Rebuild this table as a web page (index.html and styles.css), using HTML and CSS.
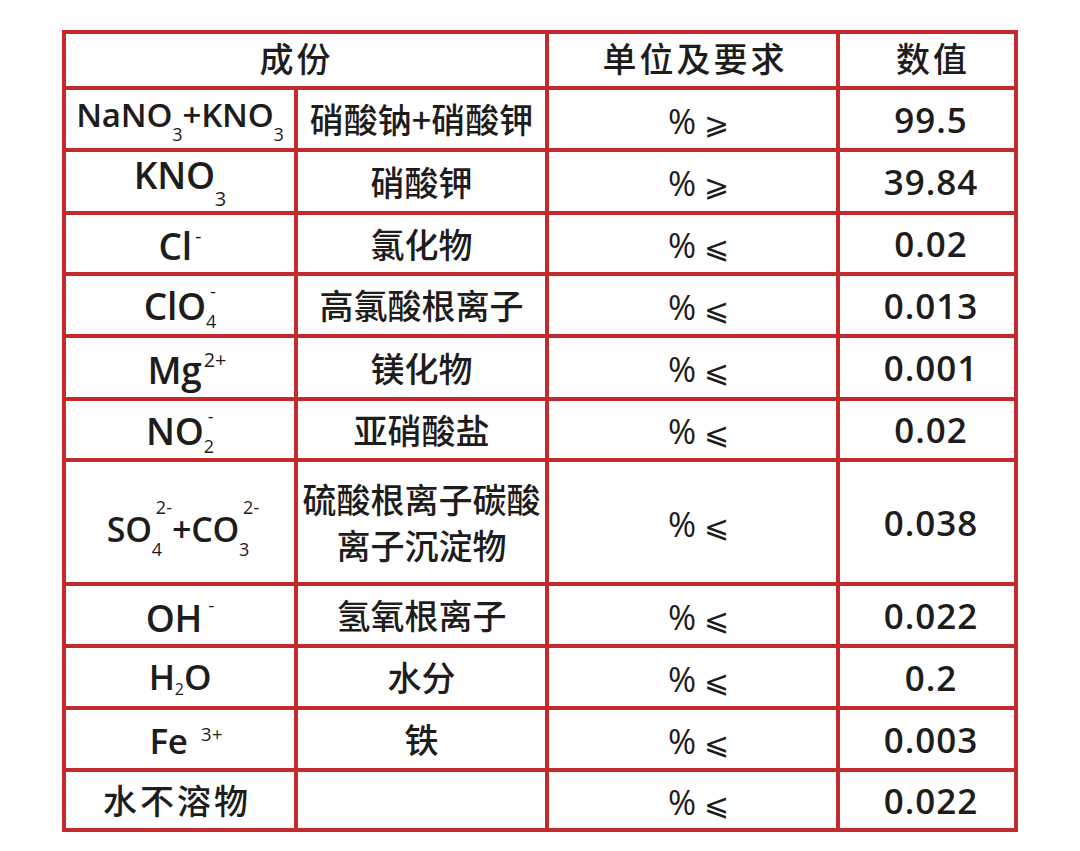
FILE: index.html
```html
<!DOCTYPE html>
<html lang="zh">
<head>
<meta charset="utf-8">
<title>成份表</title>
<link rel="stylesheet" href="styles.css">
</head>
<body>
<div class="sheet">
  <div class="cell head span2">成份</div>
  <div class="cell head">单位及要求</div>
  <div class="cell head last">数值</div>

  <div class="cell f"><span>NaNO<sub>3</sub>+KNO<sub>3</sub></span></div>
  <div class="cell cn">硝酸钠+硝酸钾</div>
  <div class="cell u"><span>%<span class="rel">⩾</span></span></div>
  <div class="cell n">99.5</div>

  <div class="cell f lg"><span>KNO<sub class="big">3</sub></span></div>
  <div class="cell cn">硝酸钾</div>
  <div class="cell u"><span>%<span class="rel">⩾</span></span></div>
  <div class="cell n">39.84</div>

  <div class="cell f lg"><span>Cl<sup class="minus">-</sup></span></div>
  <div class="cell cn">氯化物</div>
  <div class="cell u"><span>%<span class="rel">⩽</span></span></div>
  <div class="cell n">0.02</div>

  <div class="cell f lg"><span>ClO<span class="stack"><sup>-</sup><sub>4</sub></span></span></div>
  <div class="cell cn">高氯酸根离子</div>
  <div class="cell u"><span>%<span class="rel">⩽</span></span></div>
  <div class="cell n">0.013</div>

  <div class="cell f lg mg"><span>Mg<sup class="charge">2+</sup></span></div>
  <div class="cell cn">镁化物</div>
  <div class="cell u"><span>%<span class="rel">⩽</span></span></div>
  <div class="cell n">0.001</div>

  <div class="cell f lg"><span>NO<span class="stack"><sup>-</sup><sub>2</sub></span></span></div>
  <div class="cell cn">亚硝酸盐</div>
  <div class="cell u"><span>%<span class="rel">⩽</span></span></div>
  <div class="cell n">0.02</div>

  <div class="cell f ion"><span>SO<span class="stack tall"><sup>2-</sup><sub>4</sub></span>+CO<span class="stack tall"><sup>2-</sup><sub>3</sub></span></span></div>
  <div class="cell cn two">硫酸根离子碳酸<br>离子沉淀物</div>
  <div class="cell u"><span>%<span class="rel">⩽</span></span></div>
  <div class="cell n">0.038</div>

  <div class="cell f lg"><span>OH<sup class="minus gap">-</sup></span></div>
  <div class="cell cn">氢氧根离子</div>
  <div class="cell u"><span>%<span class="rel">⩽</span></span></div>
  <div class="cell n">0.022</div>

  <div class="cell f md"><span>H<sub class="small">2</sub>O</span></div>
  <div class="cell cn">水分</div>
  <div class="cell u"><span>%<span class="rel">⩽</span></span></div>
  <div class="cell n">0.2</div>

  <div class="cell f md fe"><span>Fe<sup class="gap">3+</sup></span></div>
  <div class="cell cn">铁</div>
  <div class="cell u"><span>%<span class="rel">⩽</span></span></div>
  <div class="cell n">0.003</div>

  <div class="cell cn wide">水不溶物</div>
  <div class="cell cn"></div>
  <div class="cell u"><span>%<span class="rel">⩽</span></span></div>
  <div class="cell n">0.022</div>
</div>
</body>
</html>
```

FILE: styles.css
```css
html, body {
  margin: 0;
  padding: 0;
  background: #ffffff;
}

body {
  padding: 30px 0 0 62px;
  color: #1f1c1c;
  font-family: "Open Sans", "Noto Sans CJK SC", sans-serif;
}

.sheet {
  display: grid;
  width: 956px;
  box-sizing: border-box;
  grid-template-columns: 228px 247px 287px 174px;
  grid-template-rows: 52px 58px 59px 57px 58px 59px 57px 120px 58px 58px 58px 56px;
  gap: 4px;
  padding: 4px;
  background: #c3292d;
}

.cell {
  background: #ffffff;
  display: flex;
  align-items: center;
  justify-content: center;
  text-align: center;
  font-size: 32px;
  line-height: 1;
  white-space: nowrap;
}

.head {
  font-family: "Noto Sans CJK SC", sans-serif;
  font-weight: 500;
  font-size: 34px;
  letter-spacing: 3px;
  padding-bottom: 4px;
  padding-left: 5px;
}

.head.span2 {
  grid-column: span 2;
  padding-left: 0;
  padding-right: 18px;
}

.head.last {
  padding-left: 12px;
}

.f {
  font-weight: 600;
  font-size: 33px;
  letter-spacing: -0.2px;
  padding-top: 2px;
}

.f.lg {
  font-size: 37px;
}

.f.md {
  font-size: 35px;
}

.f.mg {
  padding-left: 14px;
}

.f.fe {
  padding-left: 12px;
}

.f.ion {
  font-size: 34px;
  padding-top: 12px;
  padding-left: 6px;
}

.cn {
  font-family: "Noto Sans CJK SC", sans-serif;
  font-weight: 500;
  font-size: 34px;
}

.cn.two {
  line-height: 46px;
}

.cn.wide {
  letter-spacing: 3px;
  padding-right: 6px;
}

.u {
  font-weight: 500;
  font-size: 34px;
  padding-left: 12px;
  padding-top: 4px;
}

.rel {
  font-family: "DejaVu Sans", sans-serif;
  font-weight: 400;
  font-size: 30px;
  margin-left: 8px;
}

.n {
  font-weight: 600;
  font-size: 35px;
  letter-spacing: 1px;
  padding-left: 8px;
}

sub, sup {
  font-size: 18px;
  line-height: 1;
  font-weight: 500;
  letter-spacing: 0;
}

sub {
  vertical-align: -14px;
}

sub.big {
  font-size: 20px;
  vertical-align: -17px;
}

sub.small {
  font-size: 16px;
  vertical-align: -5px;
}

sup {
  vertical-align: 19px;
}

sup.charge {
  font-size: 20px;
  margin-left: 2px;
  vertical-align: 17px;
}

sup.minus {
  font-size: 20px;
  vertical-align: 17px;
  margin-left: 3px;
}

sup.minus.gap {
  vertical-align: 20px;
  margin-left: 6px;
}

sup.gap {
  font-size: 19px;
  margin-left: 13px;
  vertical-align: 13px;
}

.stack {
  display: inline-flex;
  flex-direction: column;
  align-items: flex-start;
  gap: 12px;
  vertical-align: 22px;
  line-height: 1;
}

.stack.tall {
  gap: 24px;
  vertical-align: 28px;
}

.stack sup,
.stack sub {
  vertical-align: baseline;
  display: block;
}

.stack sup {
  margin-left: 4px;
}
```
